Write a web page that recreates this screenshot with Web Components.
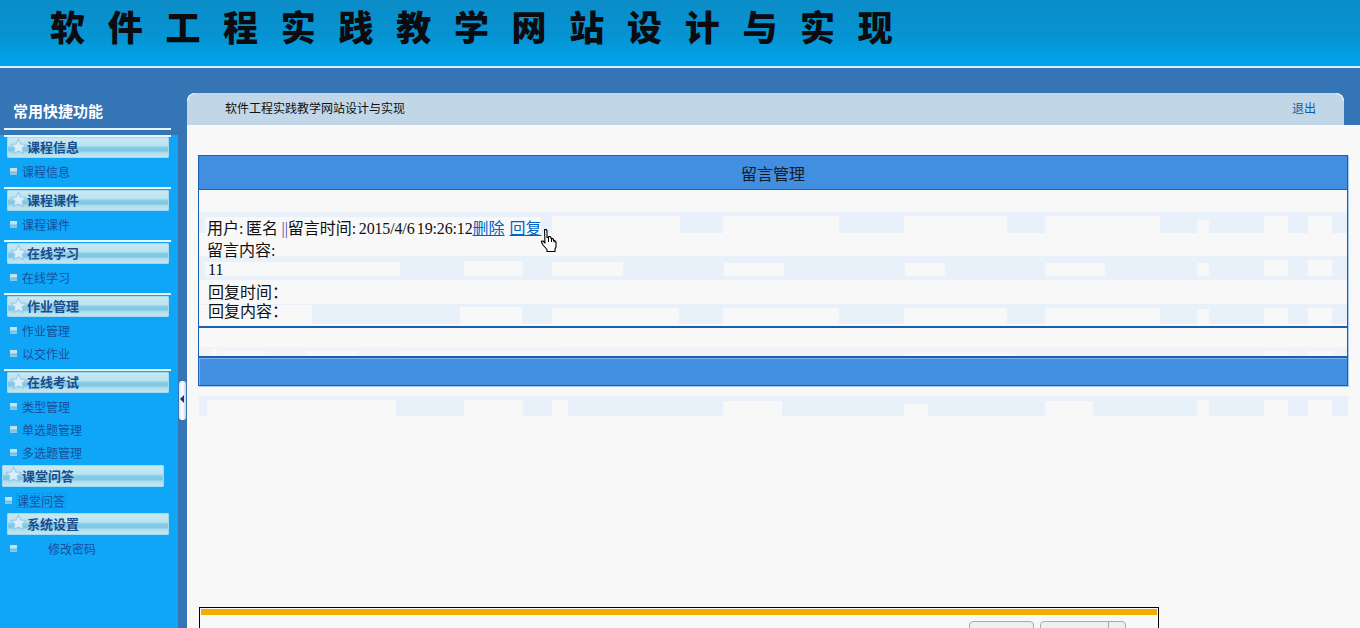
<!DOCTYPE html>
<html lang="zh">
<head>
<meta charset="utf-8">
<title>软件工程实践教学网站设计与实现</title>
<style>
  html, body { margin: 0; height: 628px; overflow: hidden; background: #f8f8f8; }
</style>
</head>
<body>
<app-shell>
  <site-banner slot="banner">软件工程实践教学网站设计与实现</site-banner>

  <side-nav slot="side" heading="常用快捷功能">
    <nav-group label="课程信息" first>
      <nav-item>课程信息</nav-item>
    </nav-group>
    <nav-group label="课程课件">
      <nav-item>课程课件</nav-item>
    </nav-group>
    <nav-group label="在线学习">
      <nav-item>在线学习</nav-item>
    </nav-group>
    <nav-group label="作业管理">
      <nav-item>作业管理</nav-item>
      <nav-item>以交作业</nav-item>
    </nav-group>
    <nav-group label="在线考试" tight>
      <nav-item>类型管理</nav-item>
      <nav-item>单选题管理</nav-item>
      <nav-item>多选题管理</nav-item>
    </nav-group>
    <nav-group label="课堂问答" plain shifted>
      <nav-item focused>课堂问答</nav-item>
    </nav-group>
    <nav-group label="系统设置" plain>
      <nav-item indent>修改密码</nav-item>
    </nav-group>
  </side-nav>

  <main-area slot="main" heading="软件工程实践教学网站设计与实现" action="退出">
    <message-panel heading="留言管理">
      <message-entry></message-entry>
    </message-panel>
    <pager-box></pager-box>
  </main-area>
</app-shell>

<script>
(function (customElements) {
    const CJK = '"Noto Sans CJK SC", "Liberation Sans", sans-serif';
    const SERIF = '"Liberation Serif", "Noto Sans CJK SC", serif';

    // Small helper: every component gets an open shadow root from a string.
    const define = (name, markup, setup) => {
        customElements.define(name, class extends HTMLElement {
            constructor() {
                super();
                this.attachShadow({ mode: 'open' }).innerHTML = markup;
            }
            connectedCallback() {
                if (setup) setup(this, this.shadowRoot);
            }
        });
    };

    define('app-shell', `
      <style>
        :host { display: grid; grid-template-columns: 178px 9px 1fr; grid-template-rows: 68px 560px;
                width: 1360px; height: 628px; overflow: hidden; background: #3574b5; position: relative; }
        .banner { grid-column: 1 / -1; }
        .rail { background: #3574b5; position: relative; }
        .handle { position: absolute; left: 1px; top: 313px; width: 7px; height: 39px; border-radius: 3px;
                  background: linear-gradient(90deg, #d5e6f6, #ffffff 50%, #b9d2ee); }
        .handle::after { content: ""; position: absolute; left: 1px; top: 14px; border: 4px solid transparent;
                  border-left-width: 0; border-right: 4px solid #12396b; }
      </style>
      <div class="banner"><slot name="banner"></slot></div>
      <slot name="side"></slot>
      <div class="rail"><div class="handle"></div></div>
      <slot name="main"></slot>`);

    define('site-banner', `
      <style>
        :host { display: block; height: 68px; box-sizing: border-box; border-bottom: 2px solid #dbeffa;
                background: linear-gradient(180deg, #0b8dc8 0, #0693d2 36px, #00a2e8 60px, #00a3ea 66px); }
        h1 { margin: 0; padding: 0 0 0 50px; font: 900 35px/51px ${CJK}; letter-spacing: 22.7px;
             color: #0b0b10; white-space: nowrap; }
      </style>
      <h1><slot></slot></h1>`);

    define('side-nav', `
      <style>
        :host { display: block; height: 560px; }
        h2 { margin: 0; height: 57px; box-sizing: border-box; padding: 33px 0 0 13px;
             font: 700 15px/20px ${CJK}; color: #fff; }
        .list { height: 503px; background: #0fa6f8; box-sizing: border-box; }
      </style>
      <h2></h2>
      <div class="list"><slot></slot></div>`,
      (el, root) => { root.querySelector('h2').textContent = el.getAttribute('heading'); });

    const STAR = `<svg width="17" height="17" viewBox="0 0 19 19"><path d="M9.500 1l2.600 5.600 6 .7-4.500 4.100 1.300 6-5.400-3-5.400 3 1.300-6L1 7.300l6-.7z" fill="#d8eef9" stroke="#9cc9e8" stroke-width="1.200" stroke-linejoin="round"/></svg>`;

    define('nav-group', `
      <style>
        :host { display: block; }
        .rule { height: 2px; margin: 0 7px 1px 4px; background: #e6f6ff; }
        :host([first]) .rule { margin-top: 10px; margin-bottom: 0; box-shadow: 0 -7px 0 #e6f6ff; }
        :host([plain]) .rule { display: none; }
        .head { position: relative; height: 21px; box-sizing: border-box; margin: 0 9px 0 7px; padding: 0 0 2px 19px;
                display: flex; align-items: center; border: 1px solid #a6d8ec; border-radius: 1px;
                background: linear-gradient(180deg, #c6e8f3 0, #bde4f1 38%, #82cae6 52%, #80c9e5 68%, #b2dfee 78%, #c2e6f2 100%);
                font: 700 13px/17px ${CJK}; color: #1b4c8c; }
        :host([plain]) .head { height: 22px; }
        :host([shifted]) .head { margin: 0 14px 0 2px; }
        svg { position: absolute; left: 2px; top: 0; }
        .items { padding: 2px 0 4px; }
        :host([tight]) .items, :host([plain]) .items { padding-bottom: 1px; }
      </style>
      <div class="rule"></div>
      <div class="head">${STAR}<span></span></div>
      <div class="items"><slot></slot></div>`,
      (el, root) => { root.querySelector('span').textContent = el.getAttribute('label'); });

    define('nav-item', `
      <style>
        :host { display: flex; align-items: center; height: 23px; padding-left: 10px; font: 12px/14px ${CJK}; color: #174f9c; }
        :host([focused]) { padding-left: 5px; }
        i { width: 7px; height: 7px; margin-right: 5px; flex: none;
            background: linear-gradient(180deg, #c5e3ef 0, #c5e3ef 45%, #74bce0 55%, #8fcbe6 100%); }
        :host([indent]) i { margin-right: 31px; }
        span { display: block; }
        :host([focused]) span { border: 1px dotted #ff3c00; border-bottom-style: solid; margin: -1px; line-height: 13px; color: #174f9c; }
      </style>
      <i></i><span><slot></slot></span>`);

    define('main-area', `
      <style>
        :host { display: block; height: 560px; position: relative; overflow: hidden; }
        .tab { position: relative; height: 32px; margin: 25px 16px 0 0; box-sizing: border-box; padding: 0 28px 2px 38px;
               display: flex; justify-content: space-between; align-items: center;
               background: #c1d7e8; border-radius: 8px 8px 0 0; font: 12px/16px ${CJK}; color: #101010; }
        .tab::before, .tab::after { content: ""; position: absolute; top: 0; width: 8px; height: 8px; box-sizing: border-box;
               border-top: 1px solid #e9f2f9; }
        .tab::before { left: 0; border-left: 1px solid #e9f2f9; border-top-left-radius: 8px; }
        .tab::after { right: 0; border-right: 1px solid #e9f2f9; border-top-right-radius: 8px; }
        .tab a { color: #1557a5; text-decoration: none; }
        .body { height: 503px; background: #f8f8f8; padding: 30px 12px 0 11px; box-sizing: border-box; }
      </style>
      <div class="tab"><span class="title"></span><a href="#"></a></div>
      <div class="body"><slot></slot></div>`,
      (el, root) => {
          root.querySelector('.title').textContent = el.getAttribute('heading');
          root.querySelector('a').textContent = el.getAttribute('action');
      });

    define('ghost-stripe', `
      <style>
        :host { position: absolute; display: block; background: #e8f1f9; }
        b { position: absolute; background: #f8f8f8; }
      </style>`,
      (el, root) => {
          // leftover frame noise from the recording: [x, width, top, height] relative to the stripe
          JSON.parse(el.getAttribute('patches') || '[]').forEach(([x, w, t, h]) => {
              const b = document.createElement('b');
              b.style.cssText = `left:${x}px;width:${w}px;top:${t}px;height:${h}px`;
              root.appendChild(b);
          });
      });

    define('message-panel', `
      <style>
        :host { display: block; width: 1150px; position: relative; box-sizing: border-box;
                border: 1px solid #1a5fb0; box-shadow: 1px 1px 0 #a9c8ea; }
        .bar { height: 33px; background: #428ee0; border-bottom: 1px solid #1a5fb0; display: flex;
               align-items: center; justify-content: center; font: 16px/20px ${CJK}; color: #1a1a22; }
        .entry { position: relative; height: 138px; border-bottom: 2px solid #1a5fb0; box-sizing: border-box; }
        .empty { height: 28px; box-sizing: content-box; border-bottom: 2px solid #1a5fb0; position: relative; overflow: hidden; }
        .foot { height: 27px; background: #428ee0; border: solid #7fb2ea; border-width: 1px 0 0 1px; box-sizing: border-box; }
      </style>
      <div class="bar"></div>
      <div class="entry"><slot></slot></div>
      <div class="empty">
        <ghost-stripe style="left:0;right:0;top:19px;height:9px;background:#f1f3f8"
          patches='[[12,6,2,7],[26,40,4,5],[108,50,4,5],[200,100,4,5],[270,90,4,5],[706,110,6,3],[1065,25,4,5],[1109,25,4,5]]'></ghost-stripe>
      </div>
      <div class="foot"></div>`,
      (el, root) => { root.querySelector('.bar').textContent = el.getAttribute('heading'); });

    const HAND = `<svg class="hand" width="18" height="24" viewBox="0 0 18 24">
      <path d="M4.500 1.500h1.500l1 1v7h1.500v-1h1.500l1 1v1h1.500l1 1v1h1l1.500 1.500v5l-1 2v2.500h-8v-2l-4-4.500-1.500-3v-1h1.500l2 2z" fill="#fff" stroke="#000" stroke-width="1.100" stroke-linejoin="round"/>
      <path d="M8.500 10v4M11.500 11v3M14 12.500v2" stroke="#000" fill="none"/></svg>`;

    define('message-entry', `
      <style>
        :host { display: block; position: absolute; inset: 0; font: 16px/22px ${SERIF}; color: #111; }
        .text { position: absolute; left: 8px; top: 28px; white-space: nowrap; }
        .text div { height: 22px; }
        .first { word-spacing: -1.5px; }
        .text .num { height: 19px; line-height: 16px; padding-left: 1px; }
        .text .gap { margin-top: 2px; height: 20px; line-height: 20px; padding-left: 1px; }
        .text .last { margin-top: 0; line-height: 18px; }
        .sep { color: #3a4aa8; margin-left: 1px; }
        .date { letter-spacing: -.15px; }
        a { color: #0063c8; }
        .del { margin-right: 2.500px; }
        .hand { position: absolute; left: 341px; top: 38px; z-index: 2; }
      </style>
      <ghost-stripe style="left:0;right:0;top:22px;height:21px" patches='[[6,336,5,16],[353,128,4,17],[524,116,4,17],[705,103,4,17],[846,115,4,17],[998,12,8,13],[1065,24,4,17],[1109,24,4,17]]'></ghost-stripe>
      <ghost-stripe style="left:0;right:0;top:66px;height:24px" patches='[[6,195,6,14],[265,59,5,15],[353,71,6,14],[525,60,7,13],[706,40,7,13],[846,60,7,13],[998,12,7,13],[1065,24,4,16],[1109,24,4,16]]'></ghost-stripe>
      <ghost-stripe style="left:0;right:0;top:114px;height:20px" patches='[[0,113,1,19],[261,62,3,17],[353,127,4,16],[524,116,4,16],[705,103,4,16],[846,115,4,16],[998,12,5,15],[1065,24,4,16],[1109,24,4,16]]'></ghost-stripe>
      <div class="text">
        <div class="first">用户: 匿名 <span class="sep">||</span>留言时间: <span class="date">2015/4/6 19:26:12</span><a class="del" href="#">删除</a> <a href="#">回复</a></div>
        <div>留言内容:</div>
        <div class="num">11</div>
        <div class="gap">回复时间：</div>
        <div class="gap last">回复内容：</div>
      </div>
      ${HAND}`);

    define('pager-box', `
      <style>
        :host { display: block; margin-top: 10px; position: relative; height: 232px; }
        .stripe { display: block; }
        .box { position: absolute; left: 1px; top: 211px; width: 960px; height: 60px; box-sizing: border-box;
               border: 1px solid #000; padding: 1px 1px 0; }
        .band { height: 6px; background: #f0ae00; }
        .tools { display: flex; justify-content: flex-end; gap: 6px; padding: 6px 31px 0 0; }
        .btn { height: 30px; box-sizing: border-box; border: 1px solid #aaa; border-radius: 4px; background: #efefef; }
        .one { width: 65px; }
        .two { width: 86px; background: linear-gradient(90deg, #efefef 67px, #aaa 67px, #aaa 68px, #efefef 68px); }
      </style>
      <ghost-stripe class="stripe" style="left:1px;width:1149px;top:0;height:20px"
        patches='[[8,189,4,16],[265,59,4,16],[353,16,4,16],[524,59,5,15],[705,24,8,12],[846,48,5,15],[998,12,4,16],[1065,24,4,16],[1109,24,4,16]]'></ghost-stripe>
      <div class="box">
        <div class="band"></div>
        <div class="tools"><div class="btn one"></div><div class="btn two"></div></div>
      </div>`);
})(window.customElements);
</script>
</body>
</html>
